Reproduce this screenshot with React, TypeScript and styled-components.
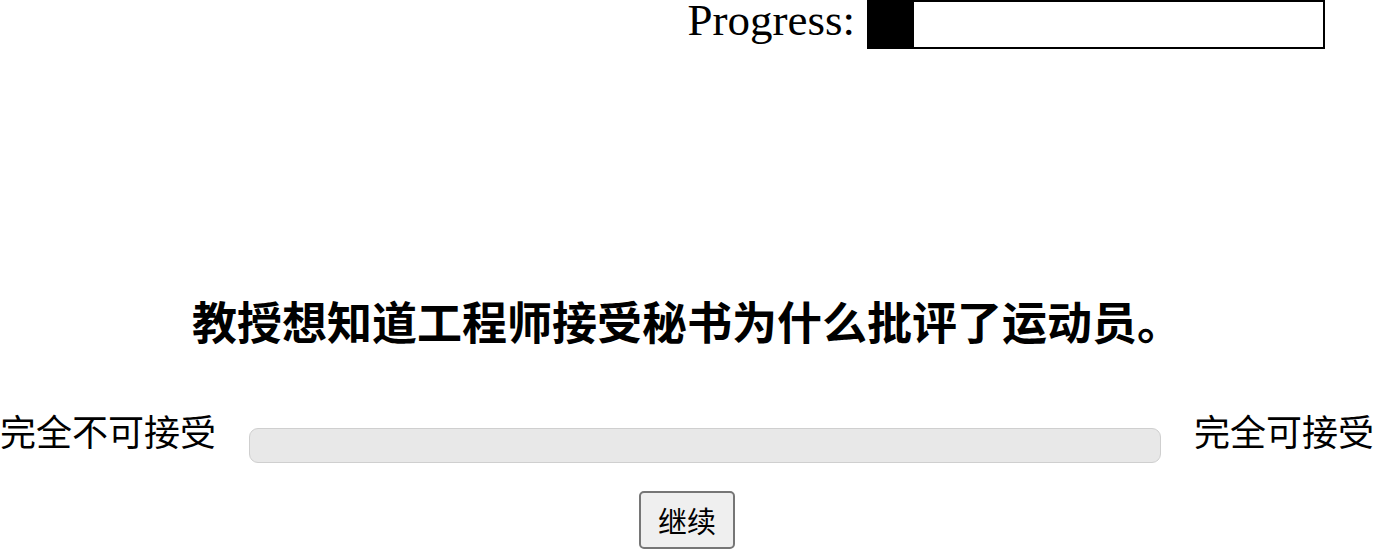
import React, { FC } from "react";
import styled, { createGlobalStyle } from "styled-components";

const GlobalStyle = createGlobalStyle`
  html, body {
    margin: 0;
    padding: 0;
    background: #ffffff;
  }
  body {
    font-family: "Liberation Sans", "Noto Sans CJK SC", sans-serif;
    color: #000000;
  }
`;

const Page = styled.div`
  width: 1374px;
  height: 549px;
  overflow: hidden;
  display: flex;
  flex-direction: column;
`;

const ProgressRow = styled.div`
  display: flex;
  justify-content: flex-end;
  align-items: flex-start;
  gap: 12px;
  padding-right: 49px;
  height: 50px;
`;

const ProgressLabel = styled.span`
  font-family: "Liberation Serif", "Times New Roman", serif;
  font-size: 45px;
  line-height: 40px;
`;

const ProgressTrack = styled.div`
  box-sizing: border-box;
  width: 458px;
  height: 49px;
  border: 2px solid #000;
  background: #fff;
`;

const ProgressFill = styled.div`
  height: 100%;
  background: #000;
`;

const Stimulus = styled.h2`
  margin: 252px 0 0;
  font-family: "Liberation Sans", "Noto Sans CJK SC", sans-serif;
  font-weight: 700;
  font-size: 45px;
  line-height: 45px;
  text-align: center;
`;

const ScaleRow = styled.div`
  display: flex;
  align-items: flex-start;
  gap: 33px;
  margin-top: 69px;
`;

const ScaleLabel = styled.span`
  font-family: "Liberation Sans", "Noto Sans CJK SC", sans-serif;
  font-size: 36px;
  line-height: 36px;
  white-space: nowrap;
`;

const SliderTrack = styled.div`
  flex: 1;
  box-sizing: border-box;
  height: 35px;
  margin-top: 12px;
  background: #e8e8e8;
  border: 1.5px solid #cfcfcf;
  border-radius: 9px;
`;

const ButtonRow = styled.div`
  display: flex;
  justify-content: center;
  margin-top: 28px;
`;

const ContinueButton = styled.button`
  box-sizing: border-box;
  width: 96px;
  height: 58px;
  padding: 0;
  font-family: "Liberation Sans", "Noto Sans CJK SC", sans-serif;
  font-size: 29px;
  color: #000;
  background: #efefef;
  border: 2px solid #767676;
  border-radius: 5px;
`;

const App: FC = () => {
  const progress = 0.1;

  return (
    <>
      <GlobalStyle />
      <Page>
        <ProgressRow>
          <ProgressLabel>Progress:</ProgressLabel>
          <ProgressTrack>
            <ProgressFill style={{ width: `${progress * 100}%` }} />
          </ProgressTrack>
        </ProgressRow>
        <Stimulus>教授想知道工程师接受秘书为什么批评了运动员。</Stimulus>
        <ScaleRow>
          <ScaleLabel>完全不可接受</ScaleLabel>
          <SliderTrack />
          <ScaleLabel>完全可接受</ScaleLabel>
        </ScaleRow>
        <ButtonRow>
          <ContinueButton>继续</ContinueButton>
        </ButtonRow>
      </Page>
    </>
  );
};

export default App;
